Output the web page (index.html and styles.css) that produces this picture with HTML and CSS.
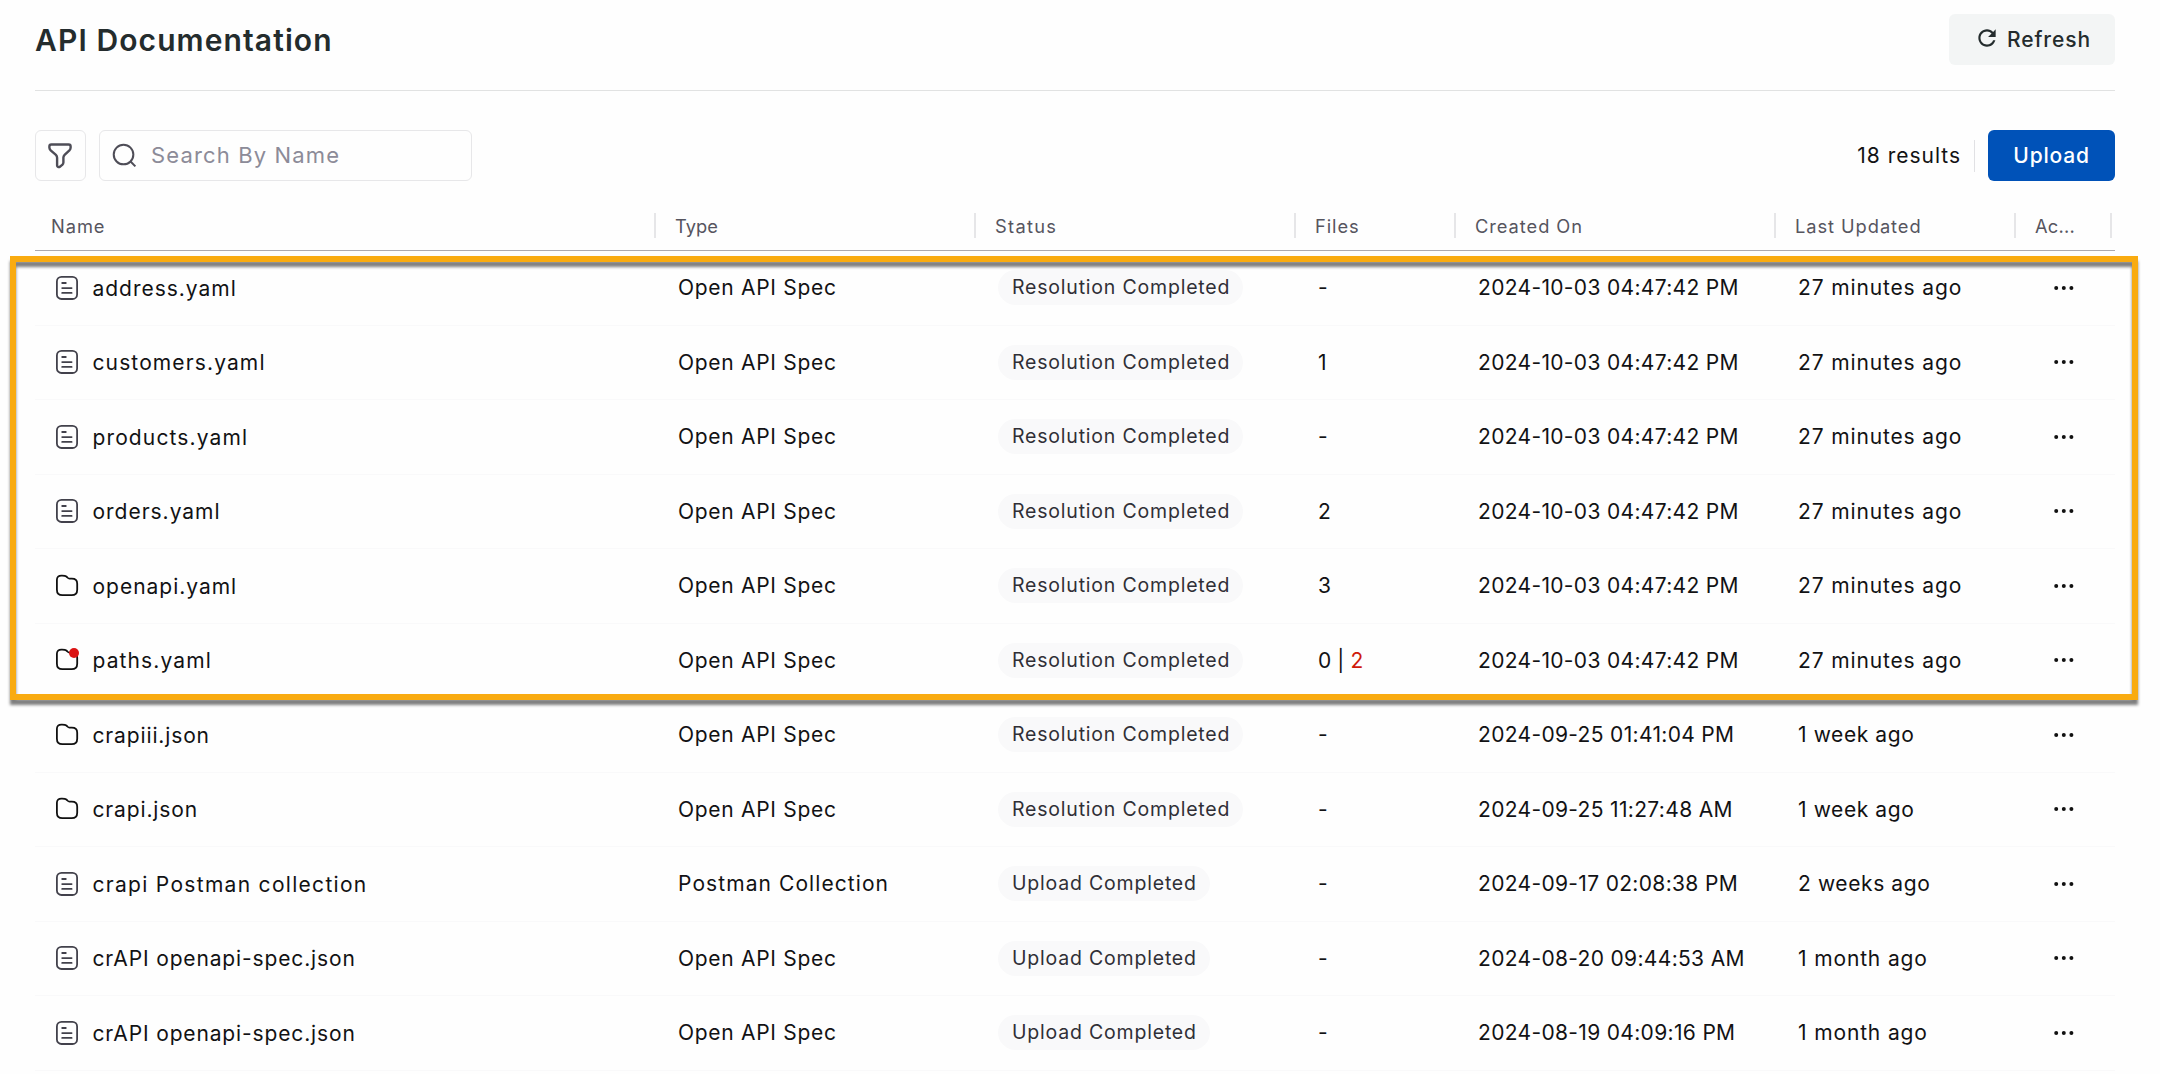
FILE: index.html
```html
<!DOCTYPE html>
<html lang="en">
<head>
<meta charset="utf-8">
<title>API Documentation</title>
<link rel="stylesheet" href="styles.css">
</head>
<body>
<svg class="sprite" aria-hidden="true">
  <symbol id="doc" viewBox="0 0 24 26">
    <rect x="1.9" y="1.8" width="20.2" height="22.2" rx="4.6"/>
    <path d="M7.2 8h3.6M7.2 13.1h9.4M7.2 17.9h9.4"/>
  </symbol>
  <symbol id="folder" viewBox="0 0 24 26">
    <path d="M1.9 6.8C1.9 4 3.6 2.6 6.4 2.6c2.4 0 3.8-.1 5 .9 1.400 1.200 1.500 2.100 3.200 2.200h2.200c3.400 0 5.400 1.800 5.400 5v6c0 3.800-2 5.500-5.600 5.500H7.400c-3.700 0-5.500-1.900-5.500-5.500z"/>
  </symbol>
  <symbol id="dots" viewBox="0 0 20 4">
    <circle cx="2.200" cy="2" r="2"/><circle cx="9.800" cy="2" r="2"/><circle cx="17.400" cy="2" r="2"/>
  </symbol>
</svg>

<main class="page">
  <header class="page-head">
    <h1 class="title">API Documentation</h1>
    <button class="btn btn-refresh">
      <svg class="refresh-icon" viewBox="0 0 24 24"><path d="M17.650 6.350C16.200 4.900 14.210 4 12 4c-4.420 0-7.990 3.580-7.990 8s3.570 8 7.990 8c3.730 0 6.840-2.550 7.730-6h-2.080c-.82 2.330-3.040 4-5.650 4-3.310 0-6-2.690-6-6s2.690-6 6-6c1.660 0 3.140.69 4.220 1.780L13 11h7V4z"/></svg>
      Refresh
    </button>
  </header>

  <div class="toolbar">
    <button class="filter" aria-label="Filter">
      <svg class="filter-icon" viewBox="0 0 24 26"><path d="M3.300 1.500h17.400c1.200 0 1.900.7 1.900 1.800v1.500c0 1-.5 1.900-1.200 2.600l-4.800 4.500c-.8.800-1.200 1.600-1.200 2.700v5c0 .9-.5 1.800-1.200 2.300l-2.300 1.800c-1.200.9-2.800.1-2.800-1.300v-7.600c0-1.100-.4-2.100-1.200-2.900L2.700 7.300C1.900 6.500 1.400 5.700 1.400 4.700V3.300c0-1.100.8-1.800 1.900-1.800z"/></svg>
    </button>
    <div class="search">
      <svg class="search-icon" viewBox="0 0 26 26"><circle cx="12" cy="12" r="10.200"/><path d="M19.300 19.300l5 5"/></svg>
      <span>Search By Name</span>
    </div>
    <span class="results">18 results</span>
    <button class="btn btn-upload">Upload</button>
  </div>

  <section class="table">
    <div class="thead">
      <span>Name</span><span class="h-type">Type</span><span class="h-status">Status</span><span>Files</span><span>Created On</span><span>Last Updated</span><span class="h-act">Ac...</span>
    </div>
    <div class="row"><div class="name"><svg class="icon gray"><use href="#doc"/></svg><span class="ls-s">address.yaml</span></div><div class="type">Open API Spec</div><div class="status"><span class="badge">Resolution Completed</span></div><div class="files">-</div><div class="created">2024-10-03 04:47:42 PM</div><div class="updated">27 minutes ago</div><div class="act"><svg class="dots"><use href="#dots"/></svg></div></div>
    <div class="row"><div class="name"><svg class="icon gray"><use href="#doc"/></svg><span>customers.yaml</span></div><div class="type">Open API Spec</div><div class="status"><span class="badge">Resolution Completed</span></div><div class="files">1</div><div class="created">2024-10-03 04:47:42 PM</div><div class="updated">27 minutes ago</div><div class="act"><svg class="dots"><use href="#dots"/></svg></div></div>
    <div class="row"><div class="name"><svg class="icon gray"><use href="#doc"/></svg><span>products.yaml</span></div><div class="type">Open API Spec</div><div class="status"><span class="badge">Resolution Completed</span></div><div class="files">-</div><div class="created">2024-10-03 04:47:42 PM</div><div class="updated">27 minutes ago</div><div class="act"><svg class="dots"><use href="#dots"/></svg></div></div>
    <div class="row"><div class="name"><svg class="icon gray"><use href="#doc"/></svg><span class="ls-s">orders.yaml</span></div><div class="type">Open API Spec</div><div class="status"><span class="badge">Resolution Completed</span></div><div class="files">2</div><div class="created">2024-10-03 04:47:42 PM</div><div class="updated">27 minutes ago</div><div class="act"><svg class="dots"><use href="#dots"/></svg></div></div>
    <div class="row"><div class="name"><svg class="icon"><use href="#folder"/></svg><span class="ls-s">openapi.yaml</span></div><div class="type">Open API Spec</div><div class="status"><span class="badge">Resolution Completed</span></div><div class="files">3</div><div class="created">2024-10-03 04:47:42 PM</div><div class="updated">27 minutes ago</div><div class="act"><svg class="dots"><use href="#dots"/></svg></div></div>
    <div class="row"><div class="name alert"><svg class="icon"><use href="#folder"/></svg><span>paths.yaml</span></div><div class="type">Open API Spec</div><div class="status"><span class="badge">Resolution Completed</span></div><div class="files split">0 | <span class="err">2</span></div><div class="created">2024-10-03 04:47:42 PM</div><div class="updated">27 minutes ago</div><div class="act"><svg class="dots"><use href="#dots"/></svg></div></div>
    <div class="row"><div class="name"><svg class="icon"><use href="#folder"/></svg><span class="ls-xs">crapiii.json</span></div><div class="type">Open API Spec</div><div class="status"><span class="badge">Resolution Completed</span></div><div class="files">-</div><div class="created">2024-09-25 01:41:04 PM</div><div class="updated weeks">1 week ago</div><div class="act"><svg class="dots"><use href="#dots"/></svg></div></div>
    <div class="row"><div class="name"><svg class="icon"><use href="#folder"/></svg><span class="ls-xs">crapi.json</span></div><div class="type">Open API Spec</div><div class="status"><span class="badge">Resolution Completed</span></div><div class="files">-</div><div class="created">2024-09-25 11:27:48 AM</div><div class="updated weeks">1 week ago</div><div class="act"><svg class="dots"><use href="#dots"/></svg></div></div>
    <div class="row"><div class="name"><svg class="icon gray"><use href="#doc"/></svg><span class="ls-l">crapi Postman collection</span></div><div class="type postman">Postman Collection</div><div class="status"><span class="badge">Upload Completed</span></div><div class="files">-</div><div class="created">2024-09-17 02:08:38 PM</div><div class="updated weeks">2 weeks ago</div><div class="act"><svg class="dots"><use href="#dots"/></svg></div></div>
    <div class="row"><div class="name"><svg class="icon gray"><use href="#doc"/></svg><span class="ls-xs">crAPI openapi-spec.json</span></div><div class="type">Open API Spec</div><div class="status"><span class="badge">Upload Completed</span></div><div class="files">-</div><div class="created">2024-08-20 09:44:53 AM</div><div class="updated">1 month ago</div><div class="act"><svg class="dots"><use href="#dots"/></svg></div></div>
    <div class="row"><div class="name"><svg class="icon gray"><use href="#doc"/></svg><span class="ls-xs">crAPI openapi-spec.json</span></div><div class="type">Open API Spec</div><div class="status"><span class="badge">Upload Completed</span></div><div class="files">-</div><div class="created">2024-08-19 04:09:16 PM</div><div class="updated">1 month ago</div><div class="act"><svg class="dots"><use href="#dots"/></svg></div></div>
    <div class="highlight"></div>
  </section>
</main>
</body>
</html>
```
FILE: styles.css
```css
* { box-sizing: border-box; }
body {
  margin: 0;
  height: 1074px;
  overflow: hidden;
  background: #fefefe;
  color: #121214;
  font: 400 21px/28px Inter, "Liberation Sans", sans-serif;
}
.sprite { display: none; }
svg { flex: none; }
button { font: inherit; border: 0; padding: 0; margin: 0; }

.page { padding: 0 45px 0 35px; }

.page-head {
  display: flex;
  align-items: flex-start;
  justify-content: space-between;
  height: 91px;
  padding-top: 14px;
  border-bottom: 1px solid #e1e2e2;
}
.title {
  margin: 8px 0 0;
  font-size: 30px;
  font-weight: 600;
  line-height: 36px;
  letter-spacing: 1.100px;
  color: #242c2d;
}
.btn {
  display: flex;
  align-items: center;
  height: 51px;
  border-radius: 6px;
  font-weight: 500;
}
.btn-refresh {
  gap: 7px;
  width: 166px;
  padding: 0 0 0 25px;
  background: #f3f5f5;
  color: #242c2d;
  letter-spacing: .9px;
}
.refresh-icon { width: 26px; height: 26px; margin-top: -3px; fill: #242c2d; }

.toolbar {
  display: flex;
  align-items: center;
  height: 51px;
  margin-top: 39px;
}
.filter {
  display: flex;
  align-items: center;
  justify-content: center;
  width: 51px;
  height: 51px;
  margin-right: 13px;
  background: none;
  border: 1px solid #e7e7e9;
  border-radius: 6px;
}
.filter-icon { width: 24px; height: 26px; margin-left: -1px; fill: none; stroke: #4e4d57; stroke-width: 2.400; }
.search {
  display: flex;
  align-items: center;
  gap: 14px;
  width: 373px;
  height: 51px;
  padding-left: 12px;
  border: 1px solid #e7e7e9;
  border-radius: 6px;
  color: #8c8b98;
  font-size: 22px;
  letter-spacing: 1.140px;
}
.search span { margin-top: -1px; }
.search-icon { width: 25px; height: 25px; fill: none; stroke: #4e4d57; stroke-width: 2.100; }
.results {
  display: flex;
  align-items: center;
  height: 32px;
  margin: 0 13px 0 auto;
  padding-right: 13px;
  border-right: 1px solid #e1e1e4;
  letter-spacing: .98px;
}
.btn-upload {
  justify-content: center;
  width: 127px;
  background: #0052b8;
  color: #fff;
  letter-spacing: .8px;
}

.table { position: relative; }
.thead, .row {
  display: grid;
  grid-template-columns: 621px 320px 320px 160px 320px 240px 98px;
}
.thead {
  height: 70px;
  padding-top: 32px;
  border-bottom: 1px solid #abaaaf;
  color: #56555f;
  font-size: 18.300px;
  line-height: 26px;
  letter-spacing: .94px;
}
.thead span { height: 25px; padding-left: 19px; border-right: 2px solid #e6e6e8; }
.thead span:first-child { padding-left: 16px; }
.thead span:last-child { margin-right: 2px; }
.thead .h-type { letter-spacing: 0; }
.thead .h-status { letter-spacing: 1.300px; }
.thead .h-act { letter-spacing: .2px; }

.row { height: 74.500px; border-bottom: 1px solid #f9f9fa; align-items: center; }
.row > div { padding-top: 1px; }
.name { position: relative; display: flex; align-items: center; gap: 13px; letter-spacing: 1.120px; }
.row .name { padding: 0 0 0 20px; }
.name span { padding-top: 2px; margin-left: .5px; }
.icon { width: 24px; height: 26px; fill: none; stroke: #111; stroke-width: 1.800; stroke-linecap: round; }
.gray { stroke: #42414b; }
.alert::after {
  content: "";
  position: absolute;
  left: 34px;
  top: 3px;
  width: 10px;
  height: 10px;
  border-radius: 50%;
  background: #db1414;
}
.ls-xs { letter-spacing: .86px; }
.ls-s { letter-spacing: .98px; }
.ls-l { letter-spacing: 1.300px; }
.type { padding-left: 22px; letter-spacing: .7px; }
.postman { letter-spacing: 1.080px; }
.status { display: flex; padding-left: 22px; }
.row .status { padding-top: 0; }
.badge {
  height: 35px;
  padding: 0 13px 0 14px;
  border-radius: 18px;
  background: #f9f9fa;
  color: #302f36;
  font-size: 19.500px;
  line-height: 35px;
  letter-spacing: .8px;
}
.files { padding-left: 22px; }
.split { letter-spacing: .1px; }
.err { color: #cf1a0c; }
.created { padding-left: 22px; letter-spacing: .33px; }
.updated { padding-left: 22px; letter-spacing: .86px; }
.weeks { letter-spacing: .6px; }
.act { display: flex; padding-left: 38px; }
.row .act { padding-top: 0; }
.dots { width: 20px; height: 4px; fill: #111; }

.highlight {
  position: absolute;
  left: -25px;
  top: 75px;
  width: 2128px;
  height: 444px;
  border: 6px solid #f9ab10;
  filter: drop-shadow(0 5px 1.500px rgba(0, 0, 0, .5));
  pointer-events: none;
}
```
